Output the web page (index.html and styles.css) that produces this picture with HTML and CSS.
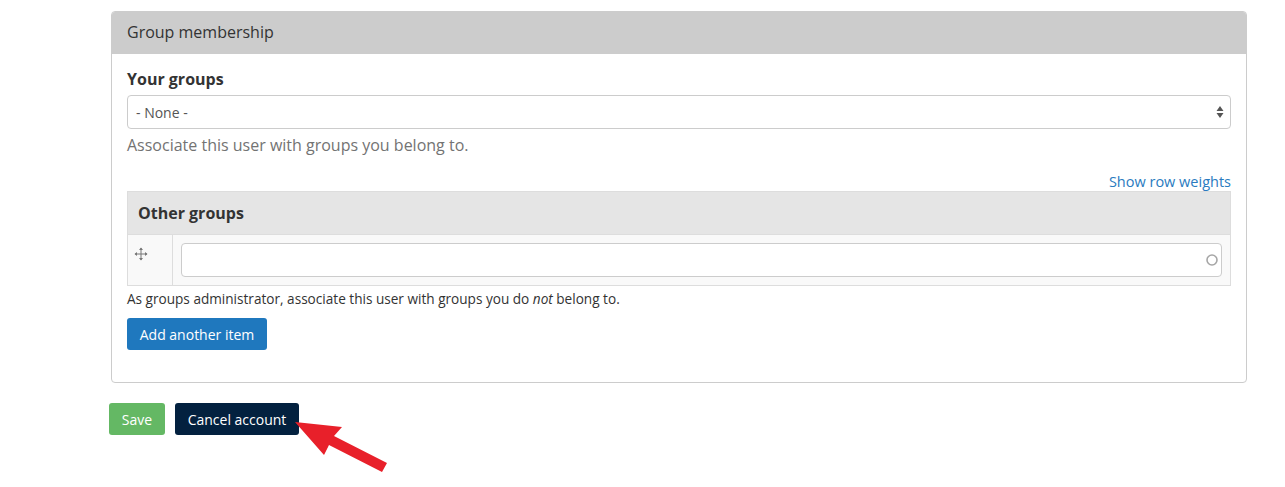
FILE: index.html
```html
<!DOCTYPE html>
<html>
<head>
<meta charset="utf-8">
<link rel="stylesheet" href="styles.css">
</head>
<body>
<div class="page">
  <fieldset class="panel">
    <div class="panel-heading">Group membership</div>
    <div class="panel-body">
      <label class="label">Your groups</label>
      <div class="select">
        <span>- None -</span>
        <svg class="select-arrows" width="8" height="14" viewBox="0 0 8 14"><path d="M4 1 L7.5 6 H0.5 Z M4 13 L7.5 8 H0.5 Z" fill="#555"/></svg>
      </div>
      <div class="desc">Associate this user with groups you belong to.</div>

      <div class="weights-row"><a class="weights">Show row weights</a></div>
      <div class="table">
        <div class="table-head">Other groups</div>
        <div class="table-row">
          <div class="drag-cell">
            <svg width="14" height="14" viewBox="0 0 14 14"><path d="M7 1 V13 M1 7 H13" stroke="#777" stroke-width="1"/><path d="M7 0.5 L9 3 H5 Z M7 13.5 L9 11 H5 Z M0.5 7 L3 5 V9 Z M13.5 7 L11 5 V9 Z" fill="#777"/></svg>
          </div>
          <div class="input-cell">
            <div class="input">
              <svg class="throbber" width="14" height="14" viewBox="0 0 14 14"><circle cx="7" cy="7" r="5" fill="none" stroke="#a6a6a6" stroke-width="1.6"/></svg>
            </div>
          </div>
        </div>
      </div>
      <div class="small-desc">As groups administrator, associate this user with groups you do <em>not</em> belong to.</div>
      <button class="btn btn-blue">Add another item</button>
    </div>
  </fieldset>
  <div class="actions">
    <button class="btn btn-green">Save</button>
    <button class="btn btn-navy">Cancel account</button>
    <div class="arrow-wrap">
      <svg class="arrow" width="110" height="70" viewBox="0 0 110 70"><path d="M5 13 L52 18 L44 27 L97 54 L92 63 L39 36 L34 46 Z" fill="#e8202a"/></svg>
    </div>
  </div>
</div>
</body>
</html>
```
FILE: styles.css
```css
html, body {
  margin: 0;
  padding: 0;
  background: #fff;
}
body {
  font-family: "Open Sans", "Liberation Sans", sans-serif;
  color: #333;
}
.page {
  padding: 11px 38px 52px 109px;
}
.panel {
  margin: 0 0 0 2px;
  padding: 0;
  border: 1px solid #ccc;
  border-radius: 4px;
  min-width: 0;
}
.panel-heading {
  background: #ccc;
  height: 42px;
  line-height: 40px;
  padding: 0 15px;
  font-size: 16px;
  color: #333;
  border-radius: 3px 3px 0 0;
}
.panel-body {
  padding: 14px 15px 32px 15px;
}
.label {
  display: block;
  font-weight: 700;
  font-size: 16px;
  line-height: 22px;
  margin-bottom: 5px;
}
.select {
  height: 32px;
  border: 1px solid #ccc;
  border-radius: 4px;
  display: flex;
  align-items: center;
  justify-content: space-between;
  padding: 0 6px 0 8px;
  font-size: 14px;
  color: #555;
}
.desc {
  font-size: 16px;
  color: #737373;
  line-height: 22px;
  margin-top: 5px;
}
.weights-row {
  display: flex;
  justify-content: flex-end;
  margin-top: 17px;
}
.weights {
  font-size: 14.5px;
  color: #2a7bc0;
  line-height: 18px;
}
.table {
  border: 1px solid #ddd;
}
.table-head {
  background: #e5e5e5;
  height: 42px;
  line-height: 42px;
  padding: 0 10px;
  font-weight: 700;
  font-size: 16px;
  border-bottom: 1px solid #ddd;
}
.table-row {
  display: flex;
  background: #f9f9f9;
  height: 50px;
}
.drag-cell {
  width: 45px;
  border-right: 1px solid #ddd;
  padding: 9px 0 0 6px;
  box-sizing: border-box;
}
.input-cell {
  flex: 1;
  padding: 8px 8px 0 8px;
}
.input {
  height: 32px;
  background: #fff;
  border: 1px solid #ccc;
  border-radius: 4px;
  display: flex;
  align-items: center;
  justify-content: flex-end;
  padding-right: 2px;
}
.small-desc {
  font-size: 13.6px;
  color: #333;
  line-height: 18px;
  margin-top: 4px;
}
.btn {
  font-family: "Open Sans", "Liberation Sans", sans-serif;
  font-size: 14px;
  border: none;
  border-radius: 3px;
  color: #fff;
  height: 32px;
  padding: 0 12px;
  cursor: pointer;
}
.btn-blue {
  background: #1f78be;
  margin-top: 10px;
  width: 140px;
}
.actions {
  position: relative;
  display: flex;
  align-items: flex-start;
  gap: 10px;
  margin-top: 20px;
}
.btn-green {
  background: #64b864;
  width: 56px;
  padding: 0;
}
.btn-navy {
  background: #03213f;
  width: 124px;
  padding: 0;
}
.arrow-wrap {
  position: absolute;
  left: 181px;
  top: 6px;
  width: 110px;
  height: 70px;
}
.arrow {
  display: block;
  width: 110px;
  height: 70px;
}
```
